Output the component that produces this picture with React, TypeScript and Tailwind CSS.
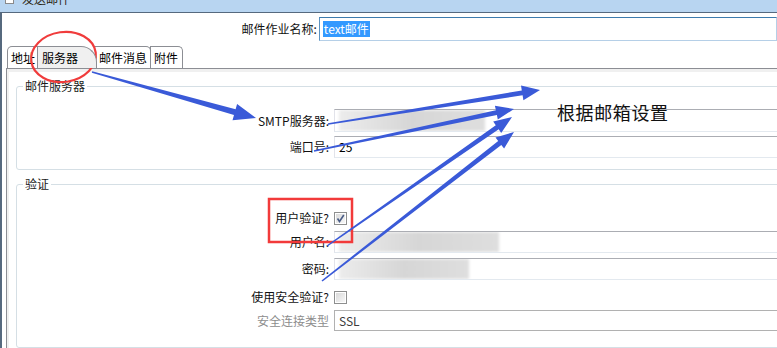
import React from "react";

// tapered arrow polygon, thin at the tail, wide at the head
function arrowPoints(
  x1: number,
  y1: number,
  x2: number,
  y2: number,
  w0: number,
  w1: number,
  hl: number,
  hw: number
) {
  const dx = x2 - x1;
  const dy = y2 - y1;
  const len = Math.hypot(dx, dy);
  const ux = dx / len;
  const uy = dy / len;
  const nx = -uy;
  const ny = ux;
  const bx = x2 - ux * hl;
  const by = y2 - uy * hl;
  const pts = [
    [x1 + (nx * w0) / 2, y1 + (ny * w0) / 2],
    [bx + (nx * w1) / 2, by + (ny * w1) / 2],
    [bx + (nx * hw) / 2, by + (ny * hw) / 2],
    [x2, y2],
    [bx - (nx * hw) / 2, by - (ny * hw) / 2],
    [bx - (nx * w1) / 2, by - (ny * w1) / 2],
    [x1 - (nx * w0) / 2, y1 - (ny * w0) / 2],
  ];
  return pts.map((p) => p[0].toFixed(1) + "," + p[1].toFixed(1)).join(" ");
}

const arrows = [
  { from: [92, 72], to: [256, 118], w0: 1.5, w1: 6, hl: 22, hw: 17 },
  { from: [328, 124], to: [540, 90], w0: 1.5, w1: 5, hl: 18, hw: 15 },
  { from: [314, 151], to: [514, 109], w0: 1.5, w1: 5, hl: 18, hw: 14 },
  { from: [327, 246], to: [512, 117], w0: 1.5, w1: 5, hl: 18, hw: 14 },
  { from: [322, 281], to: [514, 132], w0: 1.5, w1: 5, hl: 18, hw: 14 },
];

const Checkbox: React.FC<{ checked?: boolean }> = ({ checked }) => (
  <div className="w-[13px] h-[13px] border border-[#8e8f8f] bg-white p-[1px]">
    <div className="w-full h-full bg-gradient-to-br from-[#dadada] to-[#f7f7f7] flex items-center justify-center">
      {checked && (
        <svg width="9" height="9" viewBox="0 0 9 9">
          <path d="M1.5 4.5 L3.5 7.5 L7.8 1" fill="none" stroke="#4a5d86" strokeWidth="1.6" />
        </svg>
      )}
    </div>
  </div>
);

const Blur: React.FC<{ w: string }> = ({ w }) => (
  <div className={`${w} h-full bg-gradient-to-r from-[#ececec] via-[#d6d6d6] to-[#dedede] blur-[1.5px]`} />
);

const Row: React.FC<{ label: string; mt: string; h: string; gray?: boolean; children: React.ReactNode }> = ({
  label,
  mt,
  h,
  gray,
  children,
}) => (
  <div className={`flex items-center ${mt} ${h}`}>
    <div className={`w-[312px] text-right leading-[16px] ${gray ? "text-[#8d8d8d]" : "text-[#111]"}`}>{label}</div>
    <div className="ml-[5px] flex-1 h-full flex items-center">{children}</div>
  </div>
);

const TextBox: React.FC<{ children?: React.ReactNode; disabled?: boolean }> = ({ children, disabled }) => (
  <div
    className={`flex-1 h-full border flex items-center pl-[4px] overflow-hidden ${
      disabled
        ? "border-[#b1b1b1] text-[#3c3c3c]"
        : "border-t-[#abadb3] border-l-[#e2e3ea] border-r-[#e2e3ea] border-b-[#e3e9ef]"
    }`}
  >
    {children}
  </div>
);

export default function App() {
  return (
    <div className="w-[777px] h-[348px] overflow-hidden relative bg-white flex flex-col text-[12px] font-['Noto_Sans_CJK_SC','Liberation_Sans',sans-serif]">
      {/* title bar */}
      <div className="h-[12px] shrink-0 bg-[#b8d5f1] flex items-end overflow-hidden pl-[5px] gap-[8px]">
        <div className="w-[9px] h-[4px] mb-[8px] border border-t-0 border-[#8a8a8a] bg-white" />
        <span className="text-[12px] leading-[12px] mb-[7px] text-[#2b2410]">发送邮件</span>
      </div>

      {/* window body */}
      <div className="flex-1 border-l-2 border-t border-[#56697e] flex flex-col">
        {/* job name */}
        <div className="flex items-start pt-[4px] h-[28px]">
          <div className="w-[323px] text-right leading-[24px] text-[#111]">邮件作业名称:</div>
          <div className="ml-[2px] w-[470px] h-[24px] border border-t-[#3d7bad] border-l-[#5c93c1] border-r-[#b5cfe7] border-b-[#b5cfe7] flex items-center pl-[3px]">
            <span className="bg-[#3399ff] text-white leading-[16px] px-[1px]">text邮件</span>
          </div>
        </div>

        {/* tabs */}
        <div className="flex items-end ml-[5px] mt-[4px] h-[23px] leading-[21px]">
          <div className="w-[31px] h-[22px] border border-b-0 border-[#8c8e94] rounded-tl-[5px] pl-[3px] bg-white">地址</div>
          <div className="w-[60px] h-[22px] -ml-[1px] border border-b-0 border-[#8c8e94] rounded-tr-[16px] pl-[4px] bg-[#f0f0f0] z-10">
            服务器
          </div>
          <div className="w-[56px] h-[22px] -ml-[2px] border border-b-0 border-l-0 border-[#8c8e94] rounded-tr-[5px] pl-[4px] bg-white">
            邮件消息
          </div>
          <div className="w-[33px] h-[22px] -ml-[1px] border border-b-0 border-[#8c8e94] rounded-tr-[5px] pl-[3px] bg-white">附件</div>
        </div>

        {/* tab panel */}
        <div className="ml-[4px] flex-1 border-t border-l border-[#8c8e94]">
          <div className="h-full border-t-[3px] border-l-[2px] border-[#f0f0f0] flex flex-col">
            <fieldset className="ml-[7px] -mr-[30px] mt-[6px] border border-[#d5dfe5] rounded-[3px] pb-[11px]">
              <legend className="ml-[6px] px-[2px] leading-[16px] text-[#1c1c1c]">邮件服务器</legend>
              <Row label="SMTP服务器:" mt="mt-[15px]" h="h-[23px]">
                <TextBox>
                  <Blur w="w-[146px]" />
                </TextBox>
              </Row>
              <Row label="端口号:" mt="mt-[4px]" h="h-[22px]">
                <TextBox>25</TextBox>
              </Row>
            </fieldset>

            <fieldset className="ml-[7px] -mr-[30px] mt-[6px] flex-1 border border-[#d5dfe5] rounded-[3px]">
              <legend className="ml-[6px] px-[2px] leading-[16px] text-[#1c1c1c]">验证</legend>
              <Row label="用户验证?" mt="mt-[15px]" h="h-[22px]">
                <Checkbox checked />
              </Row>
              <Row label="用户名:" mt="mt-[2px]" h="h-[22px]">
                <TextBox>
                  <Blur w="w-[160px]" />
                </TextBox>
              </Row>
              <Row label="密码:" mt="mt-[5px]" h="h-[22px]">
                <TextBox>
                  <Blur w="w-[130px]" />
                </TextBox>
              </Row>
              <Row label="使用安全验证?" mt="mt-[6px]" h="h-[22px]">
                <Checkbox />
              </Row>
              <Row label="安全连接类型" mt="mt-[2px]" h="h-[21px]" gray>
                <TextBox disabled>SSL</TextBox>
              </Row>
            </fieldset>
          </div>
        </div>
      </div>

      {/* annotation text */}
      <div className="absolute left-[557px] top-[100px] text-[18px] leading-[24px] tracking-[0.6px] text-[#111]">
        根据邮箱设置
      </div>

      {/* annotation drawing */}
      <svg className="absolute left-0 top-0 pointer-events-none" width="777" height="348" viewBox="0 0 777 348">
        <ellipse cx="63.5" cy="57" rx="32.5" ry="25" fill="none" stroke="#f03c3c" strokeWidth="2.2" transform="rotate(-8 63.5 57)" />
        <rect x="269" y="199" width="83" height="43" fill="none" stroke="#f23a3a" strokeWidth="2.5" />
        {arrows.map((a, i) => (
          <polygon
            key={i}
            points={arrowPoints(a.from[0], a.from[1], a.to[0], a.to[1], a.w0, a.w1, a.hl, a.hw)}
            fill="#3a5ad8"
          />
        ))}
      </svg>
    </div>
  );
}
